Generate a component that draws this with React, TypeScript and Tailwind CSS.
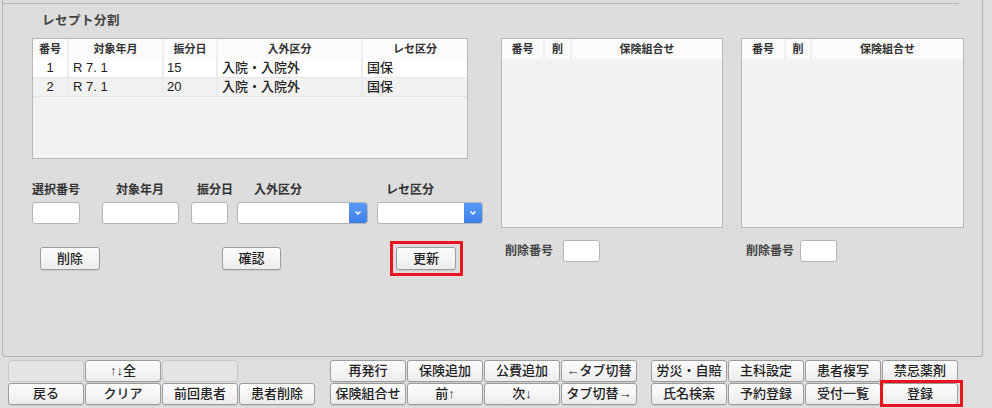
import React from "react";

const FONT = { fontFamily: '"Liberation Sans", "Noto Sans CJK JP", sans-serif' };

function Btn({ label, w, h, className = "" }: { label: string; w: string; h: string; className?: string }) {
  return (
    <div
      className={`${w} ${h} flex items-center justify-center rounded-[3px] border border-[#9c9c9c] bg-gradient-to-b from-[#fdfdfd] to-[#ececec] text-[13px] font-medium text-[#222] shadow-[0_1px_0_rgba(0,0,0,0.08)] ${className}`}
    >
      {label}
    </div>
  );
}

function Select({ w }: { w: string }) {
  return (
    <div className={`${w} h-[22px] flex rounded-[3px] border border-[#b4b4b4] bg-white overflow-hidden`}>
      <div className="flex-1" />
      <div className="w-[18px] h-full bg-gradient-to-b from-[#5a9af8] to-[#3b7ee8] flex items-center justify-center">
        <svg width="8" height="6" viewBox="0 0 8 6">
          <path d="M1.5 1.5 L4 4 L6.5 1.5" stroke="white" strokeWidth="1.5" fill="none" />
        </svg>
      </div>
    </div>
  );
}

function Input({ w }: { w: string }) {
  return <div className={`${w} h-[22px] rounded-[3px] border border-[#b4b4b4] bg-white`} />;
}

function SmallTable({ w, c1, c2 }: { w: string; c1: string; c2: string }) {
  return (
    <div className={`${w} h-[190px] border border-[#b8b8b8] bg-[#f2f2f2]`}>
      <div className="flex h-[20px] bg-[#fbfbfb] text-[11px] font-bold text-[#333]">
        <div className={`${c1} flex items-center justify-center border-r-2 border-[#efefef]`}>番号</div>
        <div className={`${c2} flex items-center justify-center border-r-2 border-[#efefef]`}>削</div>
        <div className="flex-1 flex items-center justify-center">保険組合せ</div>
      </div>
    </div>
  );
}

export default function App() {
  const rows = [
    ["1", "R 7. 1", "15", "入院・入院外", "国保"],
    ["2", "R 7. 1", "20", "入院・入院外", "国保"],
  ];
  const cols = ["w-[36px] justify-center", "w-[95px] pl-[4px]", "w-[54px] pl-[3px]", "w-[145px] pl-[4px]", "flex-1 pl-[4px]"];
  const heads = ["番号", "対象年月", "振分日", "入外区分", "レセ区分"];
  const g1r1 = ["", "↑↓全", "", null];
  const g1r2 = ["戻る", "クリア", "前回患者", "患者削除"];
  const g2r1 = ["再発行", "保険追加", "公費追加", "←タブ切替"];
  const g2r2 = ["保険組合せ", "前↑", "次↓", "タブ切替→"];
  const g3r1 = ["労災・自賠", "主科設定", "患者複写", "禁忌薬剤"];
  const g3r2 = ["氏名検索", "予約登録", "受付一覧", "登録"];

  return (
    <div style={FONT} className="w-[992px] h-[408px] bg-[#dedede] overflow-hidden text-[#333]">
      {/* main panel */}
      <div className="ml-[2px] w-[981px] h-[357px] border-l border-r border-b border-[#b2b2b2] rounded-bl-[3px] rounded-br-[3px] bg-[#dddddd]">
        <div className="pt-[3px]">
          <div className="w-[956px] h-px bg-[#b8b8b8]" />
        </div>
        <div className="ml-[39px] mt-[9px] h-[16px] leading-[16px] text-[12.5px] font-bold tracking-[0.5px] text-[#444]">
          レセプト分割
        </div>
        <div className="mt-[9px] flex">
          {/* left column */}
          <div className="ml-[29px] w-[451px]">
            <div className="w-[436px] h-[121px] border border-[#b8b8b8] bg-[#f2f2f2]">
              <div className="flex h-[20px] bg-[#fbfbfb] text-[11px] font-bold text-[#333]">
                {heads.map((h, i) => (
                  <div
                    key={i}
                    className={`${cols[i].split(" ")[0]} flex items-center justify-center ${i < 4 ? "border-r-2 border-[#efefef]" : ""}`}
                  >
                    {h}
                  </div>
                ))}
              </div>
              {rows.map((r, ri) => (
                <div
                  key={ri}
                  className={`flex h-[19px] text-[13px] font-medium text-[#222] border-b border-[#e4e4e4] ${ri === 0 ? "bg-white" : "bg-[#f1f1f1]"}`}
                >
                  {r.map((c, ci) => (
                    <div
                      key={ci}
                      className={`${cols[ci]} flex items-center ${ci < 4 ? "border-r-2 border-[#ececec]" : ""}`}
                    >
                      {c}
                    </div>
                  ))}
                </div>
              ))}
            </div>
            {/* labels */}
            <div className="mt-[23px] flex h-[16px] items-center text-[12px] font-bold text-[#333]">
              <div className="w-[84px]">選択番号</div>
              <div className="w-[81px]">対象年月</div>
              <div className="w-[57px]">振分日</div>
              <div className="w-[132px]">入外区分</div>
              <div>レセ区分</div>
            </div>
            {/* inputs */}
            <div className="mt-[4px] flex">
              <Input w="w-[48px]" />
              <div className="ml-[22px]"><Input w="w-[77px]" /></div>
              <div className="ml-[12px]"><Input w="w-[37px]" /></div>
              <div className="ml-[9px]"><Select w="w-[131px]" /></div>
              <div className="ml-[9px]"><Select w="w-[106px]" /></div>
            </div>
            {/* buttons */}
            <div className="mt-[23px] flex">
              <Btn label="削除" w="w-[60px]" h="h-[23px]" className="ml-[8px]" />
              <Btn label="確認" w="w-[59px]" h="h-[23px]" className="ml-[122px]" />
              <div className="relative ml-[115px]">
                <Btn label="更新" w="w-[60px]" h="h-[23px]" />
                <div className="absolute left-[-6px] right-[-7px] top-[-6px] bottom-[-6px] border-[3px] border-[#e8141e]" />
              </div>
            </div>
          </div>
          {/* middle column */}
          <div className="ml-[18px]">
            <SmallTable w="w-[222px]" c1="w-[43px]" c2="w-[27px]" />
            <div className="mt-[12px] flex items-center">
              <div className="ml-[4px] w-[58px] text-[12px] font-bold text-[#444]">削除番号</div>
              <Input w="w-[37px]" />
            </div>
          </div>
          {/* right column */}
          <div className="ml-[18px]">
            <SmallTable w="w-[223px]" c1="w-[44px]" c2="w-[26px]" />
            <div className="mt-[12px] flex items-center">
              <div className="ml-[5px] w-[54px] text-[12px] font-bold text-[#444]">削除番号</div>
              <Input w="w-[37px]" />
            </div>
          </div>
        </div>
      </div>

      {/* bottom button bar */}
      <div className="mt-[3px] flex">
        <div className="ml-[8px] grid grid-cols-[repeat(4,76px)] grid-rows-[22px_22px] gap-x-[1px] gap-y-[1px]">
          {g1r1.map((l, i) =>
            l === null ? (
              <div key={i} />
            ) : l === "" ? (
              <div key={i} className="rounded-[3px] border border-[#c8c8c8] bg-[#e4e4e4]" />
            ) : (
              <Btn key={i} label={l} w="w-full" h="h-full" />
            )
          )}
          {g1r2.map((l, i) => (
            <Btn key={"b" + i} label={l} w="w-full" h="h-full" />
          ))}
        </div>
        <div className="ml-[15px] grid grid-cols-[repeat(4,76px)] grid-rows-[22px_22px] gap-x-[1px] gap-y-[1px]">
          {[...g2r1, ...g2r2].map((l, i) => (
            <Btn key={i} label={l} w="w-full" h="h-full" />
          ))}
        </div>
        <div className="ml-[14px] grid grid-cols-[repeat(4,76px)] grid-rows-[22px_22px] gap-x-[1px] gap-y-[1px]">
          {[...g3r1, ...g3r2].map((l, i) =>
            l === "登録" ? (
              <div key={i} className="relative">
                <Btn label={l} w="w-full" h="h-full" />
                <div className="absolute left-[-2px] right-[-5px] top-[-3px] bottom-[-2px] border-[3px] border-[#e8141e]" />
              </div>
            ) : (
              <Btn key={i} label={l} w="w-full" h="h-full" />
            )
          )}
        </div>
      </div>
    </div>
  );
}
